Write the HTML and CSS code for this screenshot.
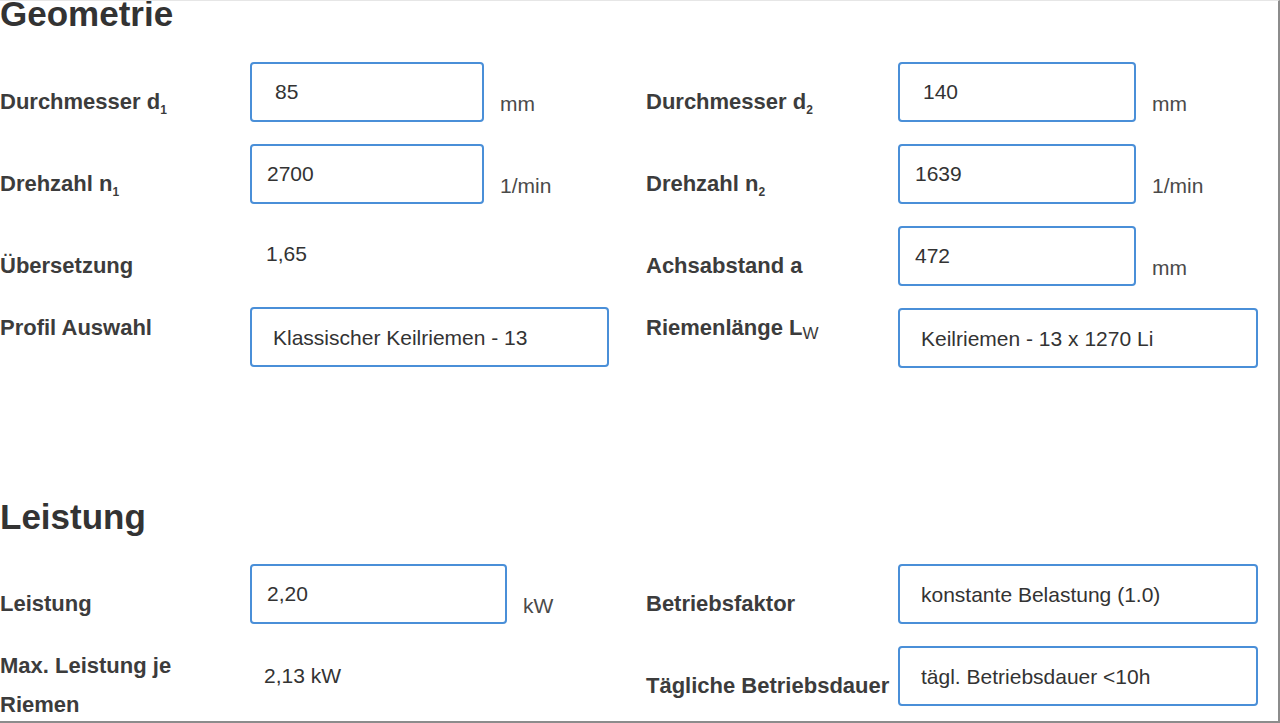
FILE: index.html
```html
<!DOCTYPE html>
<html lang="de">
<head>
    <meta charset="UTF-8">
    <meta name="viewport" content="width=device-width, initial-scale=1.0">
    <title>Keilriemen Berechnung</title>
    <link rel="stylesheet" href="styles.css">
</head>
<body>
    <div class="page">
        <section class="section section-geometry">
            <h2 class="section-title">Geometrie</h2>
            <div class="columns">
                <div class="column column-left">
                    <div class="row">
                        <label class="label">Durchmesser d<sub>1</sub></label>
                        <input class="field field-first" type="text" value="85">
                        <span class="unit">mm</span>
                    </div>
                    <div class="row">
                        <label class="label">Drehzahl n<sub>1</sub></label>
                        <input class="field" type="text" value="2700">
                        <span class="unit">1/min</span>
                    </div>
                    <div class="row">
                        <label class="label">Übersetzung</label>
                        <span class="value value-ratio">1,65</span>
                    </div>
                    <div class="row">
                        <label class="label label-top">Profil Auswahl</label>
                        <select class="choice choice-left">
                            <option>Klassischer Keilriemen - 13</option>
                        </select>
                    </div>
                </div>
                <div class="column column-right">
                    <div class="row">
                        <label class="label">Durchmesser d<sub>2</sub></label>
                        <input class="field field-first" type="text" value="140">
                        <span class="unit">mm</span>
                    </div>
                    <div class="row">
                        <label class="label">Drehzahl n<sub>2</sub></label>
                        <input class="field" type="text" value="1639">
                        <span class="unit">1/min</span>
                    </div>
                    <div class="row">
                        <label class="label">Achsabstand a</label>
                        <input class="field" type="text" value="472">
                        <span class="unit">mm</span>
                    </div>
                    <div class="row">
                        <label class="label label-top">Riemenlänge L<sub class="sub-w">W</sub></label>
                        <select class="choice choice-right">
                            <option>Keilriemen - 13 x 1270 Li</option>
                        </select>
                    </div>
                </div>
            </div>
        </section>

        <section class="section section-power">
            <h2 class="section-title">Leistung</h2>
            <div class="columns">
                <div class="column column-left">
                    <div class="row">
                        <label class="label">Leistung</label>
                        <input class="field field-wide" type="text" value="2,20">
                        <span class="unit">kW</span>
                    </div>
                    <div class="row">
                        <label class="label label-top">Max. Leistung je Riemen</label>
                        <span class="value">2,13 kW</span>
                    </div>
                </div>
                <div class="column column-right">
                    <div class="row">
                        <label class="label">Betriebsfaktor</label>
                        <select class="choice choice-right">
                            <option>konstante Belastung (1.0)</option>
                        </select>
                    </div>
                    <div class="row">
                        <label class="label">Tägliche Betriebsdauer</label>
                        <select class="choice choice-right">
                            <option>tägl. Betriebsdauer &lt;10h</option>
                        </select>
                    </div>
                </div>
            </div>
        </section>
    </div>
</body>
</html>
```

FILE: styles.css
```css
html, body {
    margin: 0;
    padding: 0;
    background: #fff;
}
body {
    font-family: 'Liberation Sans', Arial, Helvetica, sans-serif;
    color: #333;
}
.page {
    box-sizing: border-box;
    width: 1280px;
    height: 723px;
    overflow: hidden;
    border-top: 1px solid #e6e6e6;
    border-right: 2px solid #8c8c8c;
    border-bottom: 2px solid #8c8c8c;
}
.section-title {
    margin: 0 0 30px;
    font-size: 35px;
    line-height: 35px;
    font-weight: bold;
    color: #333;
}
.section-geometry .section-title {
    margin: -5px 0 31px;
}
.section-power {
    margin-top: 131px;
}
.columns {
    display: flex;
}
.column {
    display: flex;
    flex-direction: column;
    gap: 22px;
}
.column-left {
    width: 646px;
}
.column-right {
    flex: 1;
}
.row {
    display: flex;
    align-items: flex-start;
    height: 60px;
}
.label {
    flex: none;
    width: 250px;
    margin-top: 20px;
    font-size: 22px;
    line-height: 39px;
    font-weight: bold;
    color: #3c3c3c;
}
.column-right .label {
    width: 252px;
}
.label-top {
    margin-top: 0;
}
.label sub {
    font-size: 12px;
    vertical-align: -5px;
    line-height: 0;
}
.label .sub-w {
    font-size: 17px;
    font-weight: normal;
    vertical-align: -4px;
}
.field,
.choice {
    box-sizing: border-box;
    height: 60px;
    margin: 0;
    border: 2px solid #4a8fd8;
    border-radius: 4px;
    background: #fff;
    font-family: inherit;
    font-size: 21px;
    color: #333;
    outline: none;
}
.field {
    width: 234px;
    padding: 0 15px;
}
.column-right .field {
    width: 238px;
}
.field-first {
    padding-left: 23px;
}
.field-wide {
    width: 257px;
}
.choice {
    -webkit-appearance: none;
    appearance: none;
    padding: 0 21px;
}
.choice-left {
    width: 359px;
    margin-top: -1px;
}
.choice-right {
    width: 360px;
}
.unit {
    margin-left: 16px;
    margin-top: 22px;
    font-size: 21px;
    line-height: 39px;
    color: #4a4a4a;
}
.value {
    box-sizing: border-box;
    height: 60px;
    padding: 0 14px;
    font-size: 21px;
    line-height: 60px;
}
.value-ratio {
    padding-left: 16px;
    line-height: 56px;
}
```
